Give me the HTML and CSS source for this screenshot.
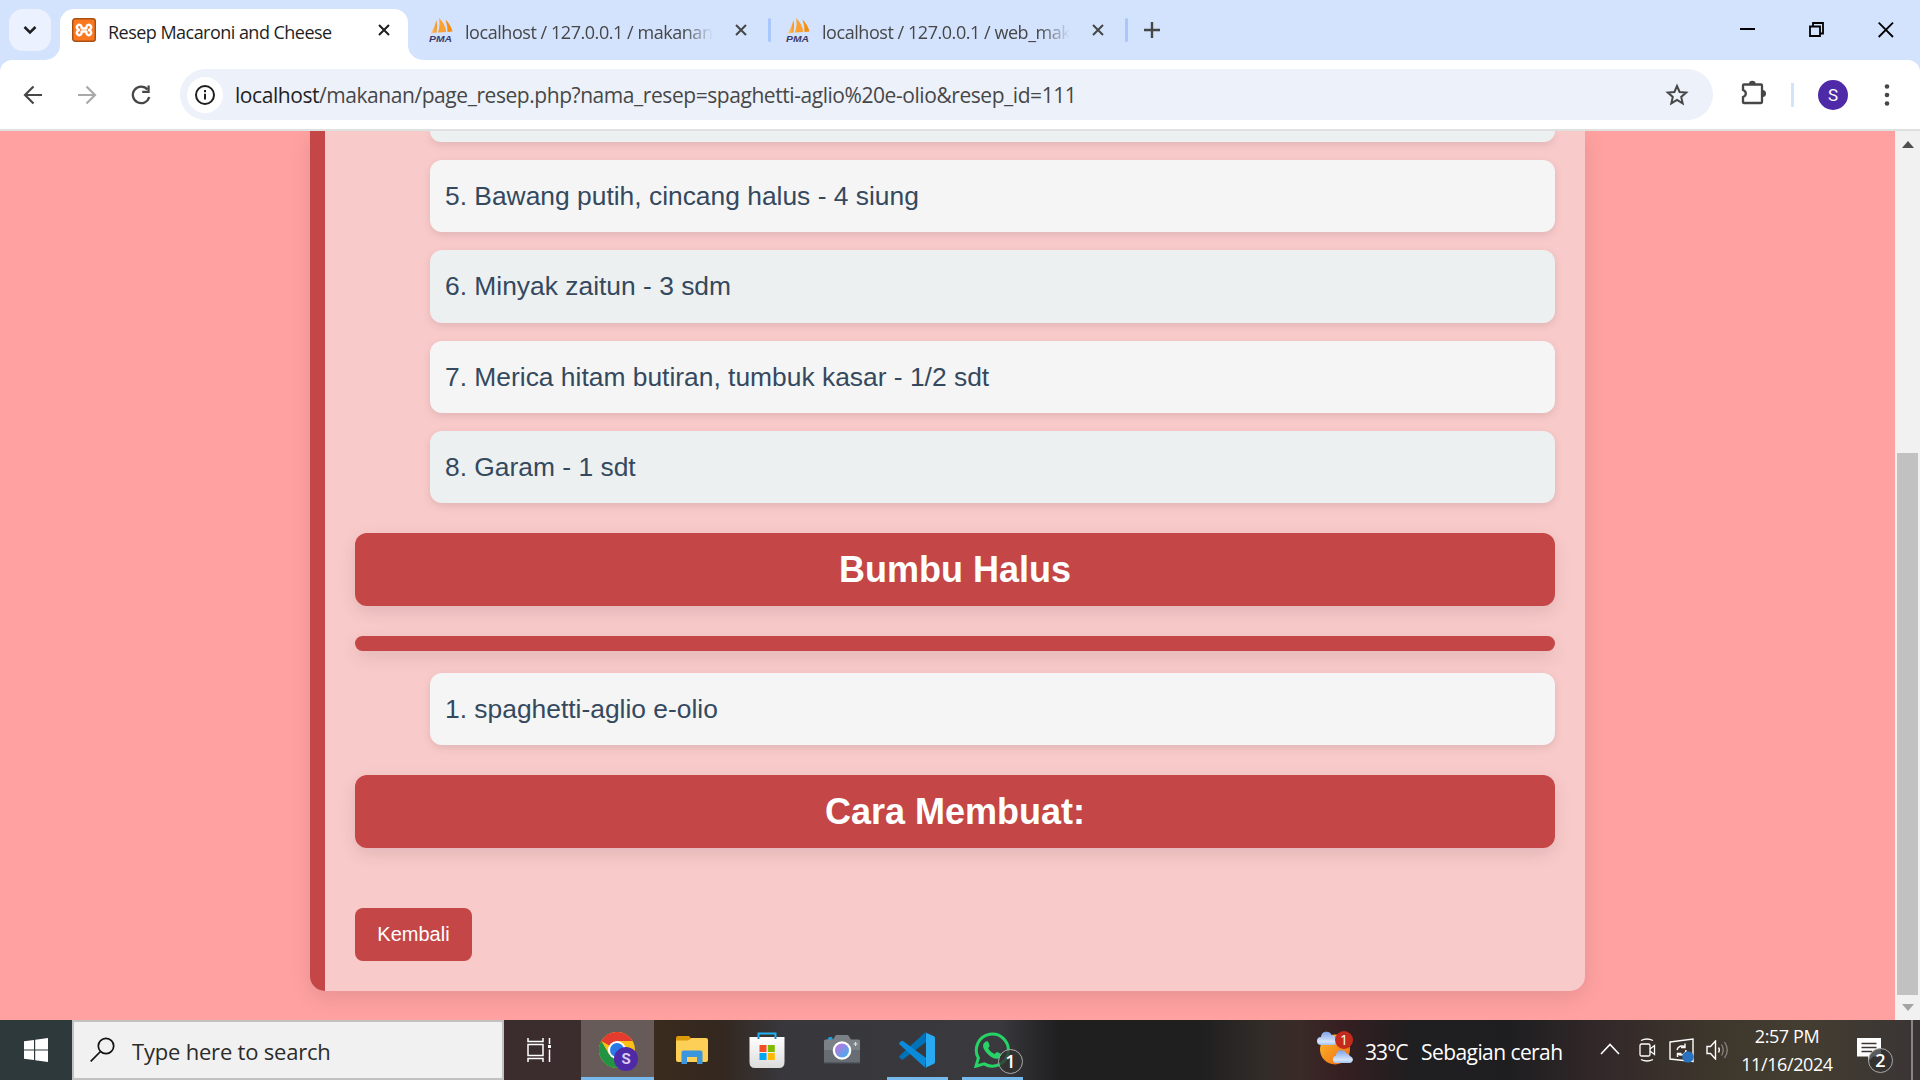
FILE: index.html
```html
<!DOCTYPE html>
<html lang="id">
<head>
<meta charset="utf-8">
<title>Resep Macaroni and Cheese</title>
<link rel="stylesheet" href="styles.css">
</head>
<body>
<svg class="defs" width="0" height="0">
  <defs>
    <linearGradient id="sail" x1="0" y1="0" x2="1" y2="0"><stop offset="0" stop-color="#fbd9a0"/><stop offset="1" stop-color="#f68d11"/></linearGradient>
    <linearGradient id="lens" x1="0" y1="0" x2="1" y2="1"><stop offset="0.2" stop-color="#b07be0"/><stop offset="1" stop-color="#35b5ee"/></linearGradient>
    <linearGradient id="bag" x1="0" y1="0" x2="0" y2="1"><stop offset="0" stop-color="#fff"/><stop offset="1" stop-color="#dcdcdc"/></linearGradient>
    <linearGradient id="sun" x1="0" y1="0" x2="1" y2="1"><stop offset="0" stop-color="#fdb92e"/><stop offset="1" stop-color="#ee6a10"/></linearGradient>
    <linearGradient id="cloud" x1="0" y1="0" x2="0" y2="1"><stop offset="0" stop-color="#7fa3e8"/><stop offset="0.75" stop-color="#d6e5fb"/><stop offset="1" stop-color="#a3c1f2"/></linearGradient>
    <symbol id="pma" viewBox="0 0 24 24">
      <path d="M7.500 2Q8.500 8 7.500 14.500L1.500 15.500Q6 9 7.500 2Z" fill="url(#sail)"/><path d="M10 0Q17 7 17 14L9 14.500Q11.500 7 10 0Z" fill="#f9a133"/><path d="M16.500 1.500Q22 7 23.500 13.500L18.500 14Q18.800 8 16.500 1.500Z" fill="#f68d11"/>
      <text x="0" y="23.500" font-family="Liberation Sans" font-size="9.500" font-weight="700" font-style="italic" textLength="23" lengthAdjust="spacingAndGlyphs" fill="#3c3d6c">PMA</text>
    </symbol>
    <symbol id="close" viewBox="0 0 12 12"><path d="M1 1L11 11M11 1L1 11" stroke="currentColor" stroke-width="2" fill="none"/></symbol>
  </defs>
</svg>

<header class="browser">
  <div class="tabstrip">
    <button class="tab-search"><svg width="14" height="10" viewBox="0 0 14 10"><path d="M1.500 2L7 7.500L12.500 2" fill="none" stroke="#1f1f1f" stroke-width="2.500"/></svg></button>
    <div class="tab tab-active">
      <svg class="curve curve-left" width="15" height="15" viewBox="0 0 15 15"><path d="M15 0V15H0A15 15 0 0 0 15 0Z" fill="#fff"/></svg>
      <svg class="favicon" viewBox="0 0 24 24"><rect x="0.700" y="0.700" width="22.600" height="22.600" rx="2.500" fill="#fa7820" stroke="#a94f12" stroke-width="1.400"/><path d="M9.500 8.500A2.400 2.400 0 1 0 6.500 11.500Q7.500 12 6.500 12.500A2.400 2.400 0 1 0 9.500 15.500L9.700 13.500H14.300L14.500 15.500A2.400 2.400 0 1 0 17.500 12.500Q16.500 12 17.500 11.500A2.400 2.400 0 1 0 14.500 8.500L14.300 10.500H9.700Z" fill="none" stroke="#fff" stroke-width="2.500" stroke-linejoin="round"/></svg>
      <span class="tab-title">Resep Macaroni and Cheese</span>
      <svg class="tab-close dark"><use href="#close"/></svg>
      <svg class="curve curve-right" width="15" height="15" viewBox="0 0 15 15"><path d="M0 0V15H15A15 15 0 0 1 0 0Z" fill="#fff"/></svg>
    </div>
    <div class="tab tab-second">
      <svg class="favicon"><use href="#pma"/></svg>
      <span class="tab-title faded">localhost / 127.0.0.1 / makanan</span>
      <svg class="tab-close"><use href="#close"/></svg>
    </div>
    <i class="tab-sep"></i>
    <div class="tab tab-third">
      <svg class="favicon"><use href="#pma"/></svg>
      <span class="tab-title faded">localhost / 127.0.0.1 / web_maka</span>
      <svg class="tab-close"><use href="#close"/></svg>
    </div>
    <i class="tab-sep"></i>
    <svg class="new-tab" width="16" height="16" viewBox="0 0 16 16"><path d="M8 0V16M0 8H16" stroke="#444746" stroke-width="2.400"/></svg>
    <div class="window-controls">
      <svg width="16" height="16" viewBox="0 0 16 16"><path d="M0 7H15" stroke="#000" stroke-width="2"/></svg>
      <svg width="16" height="16" viewBox="0 0 16 16"><path d="M1 4.500H11V14H1ZM4 4V1H14V11.500H11" fill="none" stroke="#000" stroke-width="1.800"/></svg>
      <svg width="16" height="16" viewBox="0 0 16 16"><path d="M0.700 0.700L15 15M15 0.700L0.700 15" stroke="#000" stroke-width="1.800"/></svg>
    </div>
  </div>
  <div class="toolbar-wrap">
    <div class="toolbar">
      <div class="nav">
        <svg width="20" height="20" viewBox="0 0 20 20"><path d="M19 10H2.500M10.500 1.500L2 10L10.500 18.500" fill="none" stroke="#474747" stroke-width="2.200"/></svg>
        <svg width="20" height="20" viewBox="0 0 20 20"><path d="M1 10H17.500M9.500 1.500L18 10L9.500 18.500" fill="none" stroke="#a9a9a9" stroke-width="2.200"/></svg>
        <svg width="20" height="20" viewBox="0 0 20 20"><path d="M18.200 12A8.300 8.300 0 1 1 16.500 4.500" fill="none" stroke="#474747" stroke-width="2.300"/><path d="M18.700 0.500V8H11.200V5.800H16.500V0.500Z" fill="#474747"/></svg>
      </div>
      <div class="omnibox">
        <span class="site-info"><svg width="22" height="22" viewBox="0 0 22 22"><circle cx="11" cy="11" r="9" fill="none" stroke="#1f1f1f" stroke-width="2"/><path d="M11 9.800V15.500M11 6V8.200" stroke="#1f1f1f" stroke-width="2"/></svg></span>
        <span class="url"><b>localhost</b>/makanan/page_resep.php?nama_resep=spaghetti-aglio%20e-olio&amp;resep_id=111</span>
        <svg class="star" width="24" height="24" viewBox="0 0 24 24"><path d="M12 3L14.600 9L21.200 9.600L16.200 13.900L17.700 20.400L12 17L6.300 20.400L7.800 13.900L2.800 9.600L9.400 9Z" fill="none" stroke="#474747" stroke-width="2"/></svg>
      </div>
      <svg class="puzzle" width="25" height="25" viewBox="0 0 25 25"><path d="M3 4.500H20Q21 4.500 21 5.500V22Q21 23 20 23H3Q2 23 2 22V17Q4.800 16 4.800 13.500T2 10V5.500Q2 4.500 3 4.500Z" fill="none" stroke="#474747" stroke-width="2.300"/><path d="M8 4A3.300 3.300 0 0 1 14.600 4ZM21.500 10A3.500 3.500 0 0 1 21.500 17Z" fill="#474747"/></svg>
      <i class="tool-sep"></i>
      <span class="avatar">S</span>
      <svg class="dots" width="6" height="24" viewBox="0 0 6 24"><g fill="#474747"><circle cx="3" cy="3.500" r="2.300"/><circle cx="3" cy="12" r="2.300"/><circle cx="3" cy="20.500" r="2.300"/></g></svg>
    </div>
  </div>
</header>

<main class="viewport">
  <div class="page">
    <section class="card">
      <ol class="items">
        <li class="item even clipped"></li>
        <li class="item">5. Bawang putih, cincang halus - 4 siung</li>
        <li class="item even">6. Minyak zaitun - 3 sdm</li>
        <li class="item">7. Merica hitam butiran, tumbuk kasar - 1/2 sdt</li>
        <li class="item even">8. Garam - 1 sdt</li>
      </ol>
      <h2 class="heading">Bumbu Halus</h2>
      <div class="bar"></div>
      <ol class="items">
        <li class="item">1. spaghetti-aglio e-olio</li>
      </ol>
      <h2 class="heading">Cara Membuat:</h2>
      <button class="back">Kembali</button>
    </section>
  </div>
  <div class="scrollbar">
    <svg width="12" height="7" viewBox="0 0 12 7"><path d="M6 0L12 7H0Z" fill="#505050"/></svg>
    <div class="track"><div class="thumb"></div></div>
    <svg width="12" height="7" viewBox="0 0 12 7"><path d="M0 0H12L6 7Z" fill="#a3a3a3"/></svg>
  </div>
</main>

<footer class="taskbar">
  <div class="start"><svg width="24" height="24" viewBox="0 0 24 24"><path d="M0 3.300L10 2V11.400H0ZM11.200 1.800L24 0V11.400H11.200ZM0 12.600H10V22L0 20.700ZM11.200 12.600H24V24L11.200 22.200Z" fill="#fff"/></svg></div>
  <div class="search">
    <svg width="25" height="25" viewBox="0 0 25 25"><circle cx="16" cy="9" r="7.700" fill="none" stroke="#111" stroke-width="1.700"/><path d="M10.500 14.500L0.700 24.300" stroke="#111" stroke-width="1.700"/></svg>
    <span>Type here to search</span>
  </div>
  <div class="taskview"><svg width="24" height="24" viewBox="0 0 24 24"><path d="M1 0V3.500H16V0M1 6.500H16V17.500H1ZM1 24V20.500H16V24M22.500 0V6M22.500 11.500V24" fill="none" stroke="#fff" stroke-width="1.500"/><path d="M21 7H24V10H21Z" fill="#fff"/></svg></div>
  <div class="app app-current">
    <svg width="36" height="36" viewBox="0 0 36 36"><circle cx="18" cy="18" r="18" fill="#fbc116"/><path d="M18 18L2.400 9A18 18 0 0 1 33.600 9H18Z" fill="#e33b2e"/><path d="M2.400 9A18 18 0 0 0 18 36L25.800 22.500L18 18L10.200 22.500Z" fill="#229342"/><circle cx="18" cy="18" r="9" fill="#fff"/><circle cx="18" cy="18" r="7" fill="#2878e8"/></svg>
    <span class="profile-badge">S</span>
  </div>
  <div class="app"><svg width="32" height="28" viewBox="0 0 32 28"><path d="M0 4H12L15 2H30Q32 2 32 4V24Q32 26 30 26H2Q0 26 0 24Z" fill="#fdcf57"/><path d="M0 4.500H12L15 2.500L13 0H2Q0 0 0 2Z" fill="#dd9a08"/><path d="M5.500 28V16.500Q5.500 14.500 7.500 14.500H24.500Q26.500 14.500 26.500 16.500V28H21V21H11V28Z" fill="#3a96dd"/></svg></div>
  <div class="app"><svg width="36" height="36" viewBox="0 0 36 36"><path d="M9.500 7V1.500H26.500V7" fill="none" stroke="#22b4f2" stroke-width="2"/><path d="M0.500 5H35.500V30Q35.500 36 30 36H6Q0.500 36 0.500 30Z" fill="url(#bag)"/><path d="M9.500 5V7M26.500 5V7" stroke="#1683c4" stroke-width="2"/><path d="M10.500 13H17.500V20H10.500Z" fill="#f25022"/><path d="M18.800 13H25.800V20H18.800Z" fill="#7fba00"/><path d="M10.500 21H17.500V28H10.500Z" fill="#00a4ef"/><path d="M18.800 21H25.800V28H18.800Z" fill="#ffb900"/></svg></div>
  <div class="app"><svg width="36" height="30" viewBox="0 0 36 30"><path d="M3 5L5 2H8L9 5Z" fill="#1c9de0"/><path d="M0 6Q0 4.500 1.500 4.500H9L12 0H24L27 4.500H34.500Q36 4.500 36 6V28H0Z" fill="#7b8187"/><path d="M0 15H36V29H0Z" fill="#676d73"/><path d="M0 27.500H36V29H0Z" fill="#40464b"/><circle cx="18" cy="15.500" r="9.300" fill="#fff"/><circle cx="18" cy="15.500" r="7" fill="url(#lens)"/><path d="M31.500 7V11M29.500 9H33.500" stroke="#ddd" stroke-width="1.200"/></svg></div>
  <div class="app app-open"><svg width="36" height="36" viewBox="0 0 36 36"><path d="M27 10L4 27.500Q3 28 2 27L0.500 25.500Q-0.300 24.700 0.600 23.800L26 0.500Z" fill="#0072b8"/><path d="M27 26L4 9Q3 8.300 2 9.200L0.500 10.600Q-0.300 11.500 0.600 12.400L26 35.500Z" fill="#0a8ad8"/><path d="M26 0.200L35 4.300Q36 4.800 36 6V30Q36 31.200 35 31.700L26 35.900Q27 35.500 27 34V2Q27 0.700 26 0.200Z" fill="#28aaf2"/></svg></div>
  <div class="app app-open">
    <svg width="36" height="36" viewBox="0 0 36 36"><path d="M2 34.200L4.400 26A16 16 0 1 1 10.200 31.900Z" fill="none" stroke="#27d366" stroke-width="3"/><path d="M12 9.500C13.500 8.900 14.200 9.500 14.600 10.800L15.600 13.500C15.900 14.600 14.200 15.600 14.200 16.300C15.800 19.200 18 21 20.600 22C21.500 22 22.300 20 23.200 20.100L26.700 21.700C28.500 22.500 25.700 26.800 22.700 26.800C17 26.800 9 18.600 9 13.800C9 12 10.300 10.200 12 9.500Z" fill="#27d366"/></svg>
    <span class="count-badge">1</span>
  </div>
  <div class="tray">
    <div class="weather">
      <svg width="36" height="34" viewBox="0 0 36 34"><circle cx="18" cy="18.500" r="15" fill="url(#sun)"/><path d="M4 14A4 4 0 0 1 4 6A5.500 5.500 0 0 1 14.500 4A4.500 4.500 0 0 1 19 9Q20 14 16 14Z" fill="url(#cloud)"/><path d="M18 32A4 4 0 0 1 19 24.500A5.500 5.500 0 0 1 29.500 22.500A5 5 0 0 1 33 25Q37 27 35.500 30Q34.500 32 33 32Z" fill="url(#cloud)"/></svg>
      <span class="alert-badge">1</span>
    </div>
    <span class="temp">33°C</span>
    <span class="sky">Sebagian cerah</span>
    <svg class="chevron" width="20" height="12" viewBox="0 0 20 12"><path d="M1 11L10 1.500L19 11" fill="none" stroke="#fff" stroke-width="1.600"/></svg>
    <svg class="meet" width="17" height="24" viewBox="0 0 17 24"><rect x="1" y="6" width="10" height="12" rx="1.500" fill="none" stroke="#fff" stroke-width="1.300"/><path d="M11 11L15.500 7.500V16.500L11 13M2 2.500Q8 -0.500 14 2.500M2 21.500Q8 24.500 14 21.500" fill="none" stroke="#fff" stroke-width="1.300"/></svg>
    <svg class="sync" width="26" height="25" viewBox="0 0 26 25"><path d="M1 4L24 1V23.500L1 21Z" fill="none" stroke="#fff" stroke-width="1.400"/><path d="M8 12A5 5 0 0 1 16 9M16 5.500V9.500H12M17 12A5 5 0 0 1 9 16M8.500 19V15.500H12.500" fill="none" stroke="#fff" stroke-width="1.400"/><circle cx="19" cy="19" r="5.800" fill="#2a72c0"/></svg>
    <svg class="speaker" width="24" height="20" viewBox="0 0 24 20"><path d="M1 6.500H4.500L9.500 1V19L4.500 13.500H1Z" fill="none" stroke="#fff" stroke-width="1.400"/><path d="M12.500 7.500Q14.300 10 12.500 12.500" fill="none" stroke="#fff" stroke-width="1.300"/><path d="M15.500 4.500Q19 10 15.500 15.500M18.500 2Q24 10 18.500 18" fill="none" stroke="#8a8580" stroke-width="1.300"/></svg>
    <div class="clock"><span>2:57 PM</span><span>11/16/2024</span></div>
    <div class="notify">
      <svg width="24" height="24" viewBox="0 0 24 24"><path d="M0 0H24V18.500H16L11 23.500V18.500H0Z" fill="#fff"/><path d="M4.500 5.500H19.500M4.500 9.500H19.500M4.500 13.500H15" stroke="#3a3532" stroke-width="1.400"/></svg>
      <span class="note-badge">2</span>
    </div>
    <i class="peek"></i>
  </div>
</footer>
</body>
</html>
```
FILE: styles.css
```css
* { box-sizing: border-box; }
body {
  margin: 0;
  width: 1920px;
  height: 1080px;
  overflow: hidden;
  display: flex;
  flex-direction: column;
  font-family: "Liberation Sans", Arial, sans-serif;
}
svg { display: block; flex: none; }
.defs { position: absolute; }
button { border: 0; padding: 0; font: inherit; }

/* Browser chrome */
.browser {
  height: 131px;
  flex: none;
  background: #d3e2fd;
  border-bottom: 2px solid #dfe1e0;
  font-family: "Open Sans", "Noto Sans", sans-serif;
}
.tabstrip { height: 60px; display: flex; align-items: center; padding-left: 9px; }
.tab-search {
  width: 42px;
  height: 42px;
  margin-right: 9px;
  border-radius: 14px;
  background: #ebf1fe;
  display: flex;
  align-items: center;
  justify-content: center;
}
.tab { display: flex; align-items: center; height: 42px; font-size: 18px; color: #474747; }
.tab-active {
  position: relative;
  width: 348px;
  height: 51px;
  margin-top: 9px;
  padding: 0 18px 9px 12px;
  background: #fff;
  border-radius: 14px 14px 0 0;
  color: #1f1f1f;
}
.tab-second { width: 360px; padding: 0 21px 0 21px; }
.tab-third { width: 354px; padding: 0 21px 0 15px; }
.curve { position: absolute; bottom: 0; }
.curve-left { left: -15px; }
.curve-right { right: -15px; }
.favicon { width: 24px; height: 24px; margin-right: 12px; }
.tab-title { flex: 1; min-width: 0; white-space: nowrap; letter-spacing: -0.53px; padding-top: 3px; }
.faded { mask-image: linear-gradient(90deg, #000 88%, transparent); margin-right: 22px; letter-spacing: -0.45px; }
.tab-close { width: 12px; height: 12px; color: #444746; }
.dark { color: #1f1f1f; }
.tab-sep { width: 3px; height: 24px; background: #a8c7fa; border-radius: 2px; }
.new-tab { margin-left: 16px; }
.window-controls { display: flex; gap: 53px; margin-left: auto; margin-right: 26px; }
.toolbar-wrap { background: #d3e2fd; }
.toolbar {
  height: 69px;
  background: #fff;
  border-radius: 12px 12px 0 0;
  display: flex;
  align-items: center;
}
.nav { display: flex; gap: 34px; padding-left: 23px; width: 180px; }
.omnibox {
  width: 1533px;
  height: 51px;
  border-radius: 26px;
  background: #ecf1fa;
  display: flex;
  align-items: center;
  padding: 0 24px 0 7px;
}
.site-info {
  width: 36px;
  height: 36px;
  border-radius: 50%;
  background: #fff;
  display: flex;
  align-items: center;
  justify-content: center;
}
.url { margin-left: 12px; font-size: 21px; letter-spacing: -0.44px; color: #474747; white-space: nowrap; }
.url b { font-weight: 400; color: #1f1f1f; }
.star { margin-left: auto; }
.puzzle { margin-left: 28px; margin-top: -4px; }
.tool-sep { width: 3px; height: 24px; margin-left: 25px; background: #d3e2fd; }
.avatar {
  width: 30px;
  height: 30px;
  margin-left: 24px;
  border-radius: 50%;
  background: #4e2aa8;
  color: #fff;
  font: 17px/30px Roboto, sans-serif;
  text-align: center;
}
.dots { margin-left: 36px; }

/* Recipe page */
.viewport { height: 889px; flex: none; display: flex; overflow: hidden; background: #ffa1a1; }
.page { flex: 1; display: flex; align-items: flex-start; padding-left: 310px; }
.card {
  width: 1275px;
  height: 860px;
  padding: 0 30px 30px;
  border-left: 15px solid #c44646;
  border-radius: 0 0 15px 15px;
  background: #f9caca;
  box-shadow: 0 6px 22px rgba(0, 0, 0, 0.1);
  display: flex;
  flex-direction: column;
  align-items: stretch;
}
.items { list-style: none; margin: 0; padding: 0 0 0 75px; display: flex; flex-direction: column; gap: 18px; }
.item {
  height: 72.3px;
  padding: 0 15px;
  border-radius: 12px;
  background: #f5f5f5;
  box-shadow: 0 3px 9px rgba(0, 0, 0, 0.1);
  color: #34495e;
  font-size: 26.4px;
  line-height: 73px;
  white-space: nowrap;
}
.even { background: #ecf0f1; }
.clipped { height: 11px; border-radius: 0 0 12px 12px; }
.heading {
  margin: 30px 0 0;
  height: 72.7px;
  border-radius: 12px;
  background: #c44646;
  box-shadow: 0 6px 18px rgba(0, 0, 0, 0.1);
  color: #fff;
  font-size: 36px;
  font-weight: 700;
  line-height: 73px;
  text-align: center;
}
.bar {
  height: 15px;
  margin: 30px 0 22px;
  border-radius: 8px;
  background: #c44646;
  box-shadow: 0 6px 18px rgba(0, 0, 0, 0.1);
}
.back {
  align-self: flex-start;
  width: 117px;
  height: 53px;
  margin-top: auto;
  border-radius: 8px;
  background: #c44646;
  color: #fff;
  font-size: 20px;
}
.scrollbar {
  width: 25px;
  background: #f1f1f1;
  display: flex;
  flex-direction: column;
  align-items: center;
  padding: 10px 0 9px;
}
.track { flex: 1; width: 21px; padding-top: 305px; margin-bottom: 9px; display: flex; }
.thumb { flex: 1; background: #c1c1c1; }

/* Taskbar */
.taskbar {
  height: 60px;
  flex: none;
  display: flex;
  color: #fff;
  font-family: "Open Sans", "Noto Sans", sans-serif;
  background: linear-gradient(90deg, #2e393c 0, #2e393c 72px, #3b2c2e 504px, #3b2c2e 590px, #3a2b1e 655px, #33271f 720px, #38373b 780px, #39393e 1000px, #2b2b2e 1030px, #1f1f20 1060px, #1f1f20 1200px, #332c28 1265px, #3a2a28 1300px, #361f22 1340px, #1f1e20 1410px, #1e1e20 1510px, #322829 1600px, #3c352b 1700px, #443d31 1800px, #3a3535 1920px);
}
.start { width: 72px; display: flex; align-items: center; justify-content: center; }
.search {
  width: 432px;
  border: 2px solid #c1c1c1;
  background: #f1f1f1;
  display: flex;
  align-items: center;
  padding-left: 16px;
  gap: 17px;
  color: #2b2b2b;
  font-size: 22px;
  letter-spacing: -0.2px;
  white-space: nowrap;
}
.search span { padding-top: 2px; }
.search svg { margin-top: -2px; }
.taskview { width: 77px; display: flex; align-items: center; padding-left: 23px; }
.app {
  position: relative;
  width: 75px;
  display: flex;
  align-items: center;
  padding-left: 19px;
}
.app-current { width: 73px; background: #675b5a; border-bottom: 3px solid #76b9ed; padding-left: 18px; }
.app-current + .app { width: 76px; padding-left: 22px; }
.app-current > svg { margin-top: 3px; }
.app-open::after { content: ""; position: absolute; left: 7px; right: 7px; bottom: 0; height: 3px; background: #76b9ed; }
.profile-badge {
  position: absolute;
  left: 33px;
  top: 27px;
  width: 24px;
  height: 24px;
  border-radius: 50%;
  background: #4e2aa8;
  color: #d8cdf0;
  font: 700 15px/24px Roboto, sans-serif;
  text-align: center;
}
.count-badge, .note-badge {
  position: absolute;
  width: 25px;
  height: 25px;
  border: 1px solid #aaa;
  border-radius: 50%;
  background: rgba(50, 50, 50, 0.8);
  font-size: 18px;
  font-weight: 600;
  line-height: 23px;
  text-align: center;
}
.count-badge { left: 43px; top: 29px; }
.tray { flex: 1; display: flex; align-items: center; padding-left: 287px; white-space: nowrap; }
.weather { position: relative; width: 36px; margin-top: -4px; }
.alert-badge {
  position: absolute;
  left: 18px;
  top: 0;
  width: 18px;
  height: 18px;
  border-radius: 50%;
  background: #c42b1c;
  font-size: 14px;
  line-height: 18px;
  text-align: center;
}
.temp { width: 44px; margin-left: 12px; font-size: 21px; letter-spacing: -0.9px; padding-top: 3px; }
.sky { width: 141px; margin-left: 12px; font-size: 21px; letter-spacing: -0.57px; padding-top: 3px; }
.chevron { margin-left: 38px; margin-top: -2px; }
.meet { margin-left: 19px; }
.sync { margin-left: 13px; }
.speaker { margin-left: 11px; }
.clock { width: 96px; margin-left: 9px; display: flex; flex-direction: column; align-items: center; font-size: 18px; line-height: 28px; letter-spacing: -0.4px; }
.notify { position: relative; margin-left: 22px; }
.note-badge { left: 11px; top: 10px; }
.peek { width: 2px; height: 60px; margin-left: 30px; background: #8a8683; }
```
